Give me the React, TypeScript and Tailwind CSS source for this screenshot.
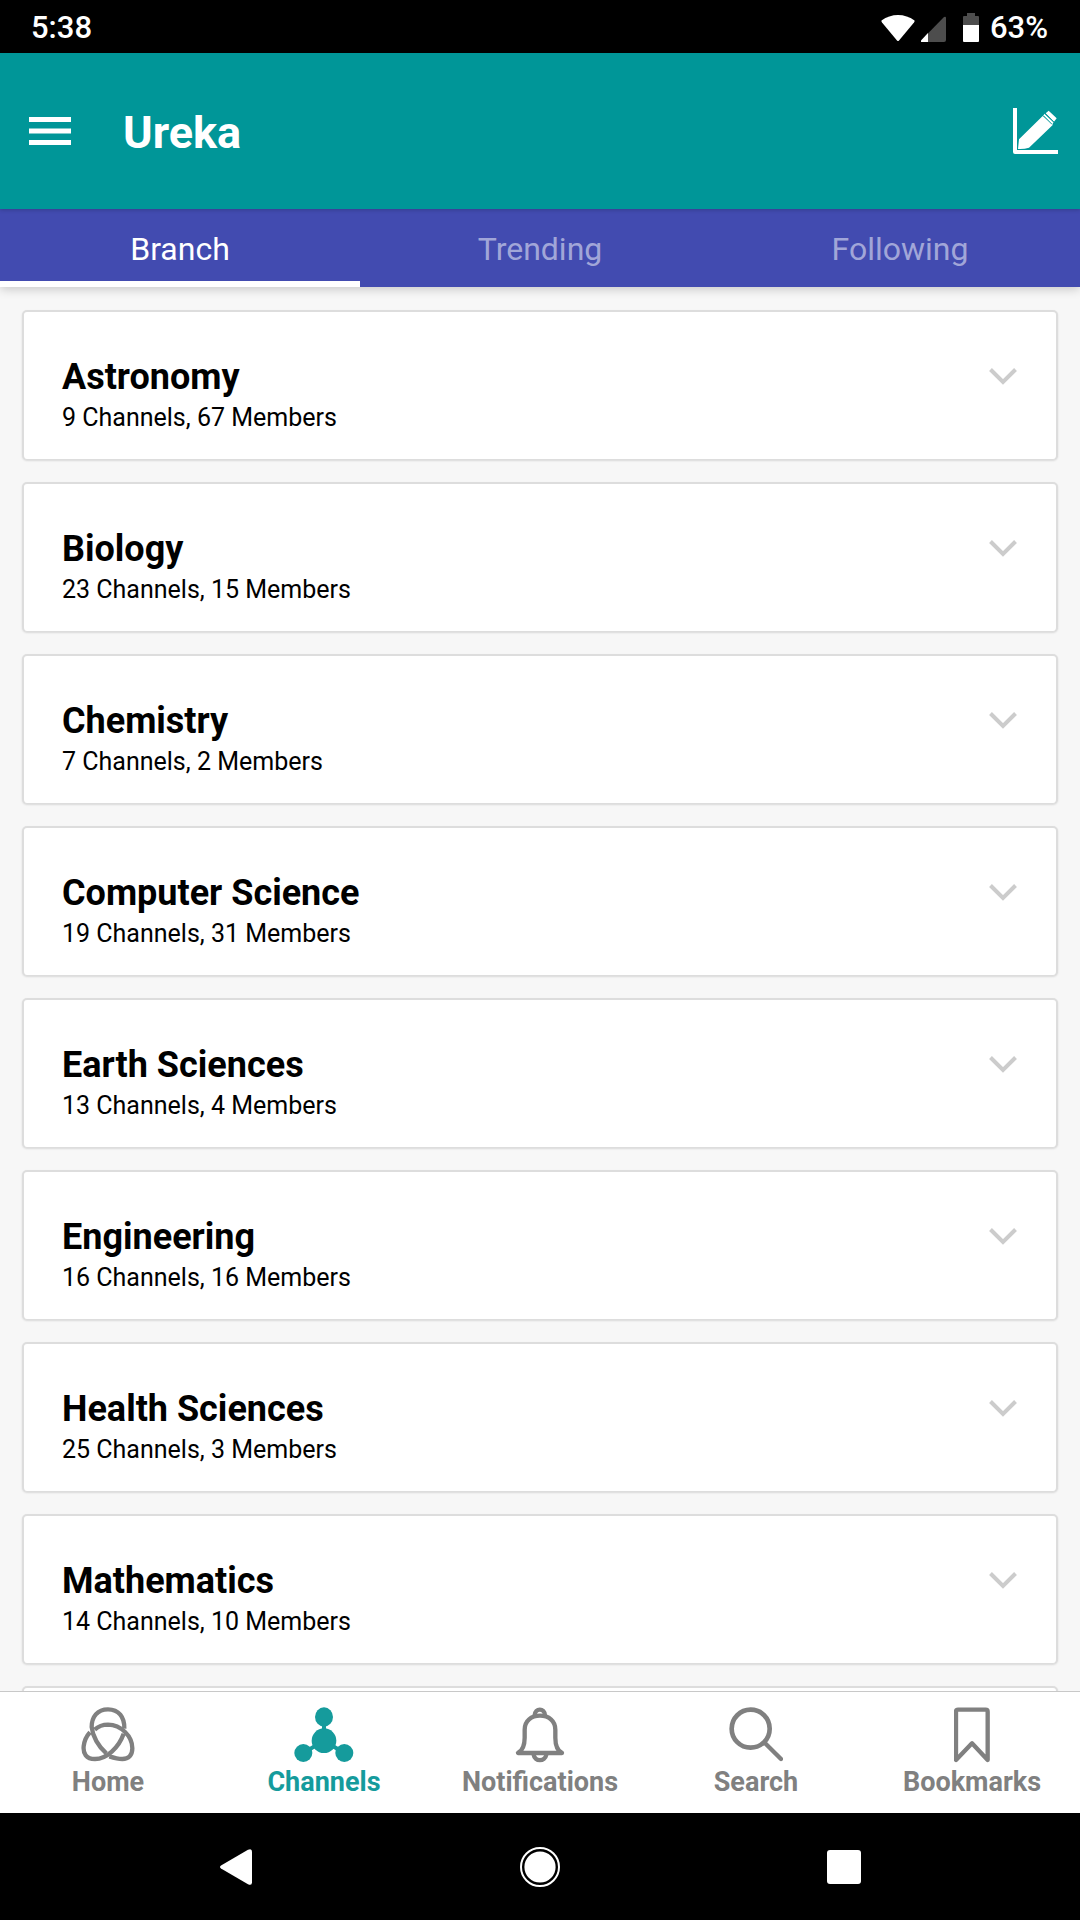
import type { ReactNode } from "react";

const branches = [
  { name: "Astronomy", channels: 9, members: 67 },
  { name: "Biology", channels: 23, members: 15 },
  { name: "Chemistry", channels: 7, members: 2 },
  { name: "Computer Science", channels: 19, members: 31 },
  { name: "Earth Sciences", channels: 13, members: 4 },
  { name: "Engineering", channels: 16, members: 16 },
  { name: "Health Sciences", channels: 25, members: 3 },
  { name: "Mathematics", channels: 14, members: 10 },
];

function StatusBar() {
  return (
    <div className="flex h-[53px] shrink-0 items-center justify-between bg-black pt-0.5 pr-8 pl-[31px] text-[31px] leading-8 font-medium">
      <span>5:38</span>
      <div className="flex items-center">
        <svg className="mr-1.5 h-7 w-[34px]" viewBox="0 0 34 28" fill="currentColor" aria-hidden="true">
          <path d="M.5 6.5Q8 1 17 1t16.500 5.500Q34 7 33 8.500L18 26.500q-1 1-2 0L1 8.500Q0 7 .5 6.500Z" />
        </svg>
        <svg className="mr-[17px] h-7 w-[25px]" viewBox="0 0 25 28" aria-hidden="true">
          <path d="M25 4v22q0 2-2 2H1q-2 0-.500-2L23 3q2-1 2 1Z" fill="#4d4d4d" />
          <path d="M7 19v9H1q-2 0-.500-2Z" fill="currentColor" />
        </svg>
        <svg className="mr-[11px] h-[29px] w-4" viewBox="0 0 16 29" aria-hidden="true">
          <path d="M0 12V4q0-1 1-1h3V0h8v3h3q1 0 1 1v8Z" fill="#4d4d4d" />
          <path d="M0 12h16v16q0 1-1 1H1q-1 0-1-1Z" fill="currentColor" />
        </svg>
        <span>63%</span>
      </div>
    </div>
  );
}

function Header() {
  return (
    <header className="relative z-20 flex h-[156px] shrink-0 items-center bg-[#009698] pr-[22px] pl-[29px] shadow-[0_1px_4px_rgba(0,0,0,0.2)]">
      <button type="button" aria-label="Menu" className="mr-[52px]">
        <svg className="h-7 w-[42px]" viewBox="0 0 42 28" fill="currentColor" aria-hidden="true">
          <path d="M0 0h42v5H0zM0 11.500h42v5H0zM0 23h42v5H0z" />
        </svg>
      </button>
      <h1 className="flex-1 pt-[3px] text-[45px] leading-[52px] font-bold">Ureka</h1>
      <button type="button" aria-label="New post">
        <svg className="h-[46px] w-[45px]" viewBox="459 321 135 138" aria-hidden="true">
          <path d="M465 321v132h129" fill="none" stroke="currentColor" strokeWidth="12" strokeLinejoin="round" />
          <path
            d="M474 444l3-29 71-70 31 26-72 69q-15 5-33 4ZM557 337l9-8 24 23-8 10Z"
            fill="currentColor"
          />
          <path d="M549 344l5-6 27 26-5 7Z" fill="currentColor" />
          <path d="M550 344l26 26M555 338l27 26" stroke="#009698" strokeWidth="3" />
        </svg>
      </button>
    </header>
  );
}

function Tabs() {
  const tabs = ["Branch", "Trending", "Following"];
  return (
    <div
      role="tablist"
      className="relative z-10 grid h-[78px] shrink-0 grid-cols-3 bg-[#424bb0] text-[32px] shadow-[0_2px_10px_rgba(0,0,0,0.2)]"
    >
      {tabs.map((tab, i) => (
        <button
          key={tab}
          type="button"
          role="tab"
          aria-selected={i === 0}
          className={
            i === 0
              ? "border-y-6 border-t-transparent border-b-white pt-0.5 text-white"
              : "border-y-6 border-transparent pt-0.5 text-[#a1a6d8]"
          }
        >
          {tab}
        </button>
      ))}
    </div>
  );
}

function Card({ children }: { children?: ReactNode }) {
  return (
    <li className="h-[150px] shrink-0 rounded-[5px] border-2 border-b border-[#dddddd] bg-white shadow-[0_1px_2px_rgba(0,0,0,0.12)]">
      {children}
    </li>
  );
}

function BranchList() {
  return (
    <ul className="flex min-h-0 flex-1 flex-col gap-[22px] overflow-hidden px-[22px] pt-[23px]">
      {branches.map((b) => (
        <Card key={b.name}>
          <button type="button" className="flex h-full w-full items-start justify-between pt-[43px] pr-[39px] pl-[38px] text-left text-black">
            <span className="flex flex-col">
              <span className="text-[36px] leading-[44px] font-bold">{b.name}</span>
              <span className="text-[25px] leading-[38px]">
                {b.channels} Channels, {b.members} Members
              </span>
            </span>
            <svg className="mt-[13px] h-[17px] w-7" viewBox="0 0 28 17" fill="none" stroke="#cccccc" strokeWidth="4" aria-hidden="true">
              <path d="M1.500 1.500 14 14 26.500 1.500" />
            </svg>
          </button>
        </Card>
      ))}
      <Card />
    </ul>
  );
}

const navItems: { label: string; icon: ReactNode }[] = [
  {
    label: "Home",
    icon: (
      <svg className="h-14 w-[54px]" viewBox="245 170 162 168" fill="none" stroke="currentColor" strokeWidth="13" aria-hidden="true">
        <path d="M375 235C376 200 358 177 326 177C294 177 277 200 277 230C280 258 297 289 321 309" />
        <path d="M373 250C358 292 322 326 287 326C260 326 251 309 253 288C255 271 261 258 272 246" />
        <path d="M286 238C298 227 311 223 326 223C365 224 399 257 399 294C399 315 388 326 369 326C355 326 342 322 330 318" />
      </svg>
    ),
  },
  {
    label: "Channels",
    icon: (
      <svg className="h-14 w-[60px]" viewBox="884 170 180 168" fill="currentColor" aria-hidden="true">
        <path d="M974 200v71l-62 37M974 271l61 37" stroke="currentColor" strokeWidth="12" fill="none" />
        <ellipse cx="974" cy="200" rx="27" ry="29" />
        <circle cx="974" cy="271" r="37" />
        <circle cx="912" cy="308" r="27" />
        <circle cx="1035" cy="308" r="27" />
      </svg>
    ),
  },
  {
    label: "Notifications",
    icon: (
      <svg className="h-14 w-[50px]" viewBox="346 170 150 168" fill="none" stroke="currentColor" strokeWidth="13" aria-hidden="true">
        <path
          d="M355 308H487C474 301 467 285 467 262V238C467 211 447 196 421 196S375 211 375 238V262C375 285 369 300 355 308Z"
          strokeLinejoin="round"
        />
        <path d="M405 195C406 172 435 172 436 195M402 313C405 335 436 335 440 313" />
      </svg>
    ),
  },
  {
    label: "Search",
    icon: (
      <svg className="h-14 w-[54px]" viewBox="86 170 162 168" fill="none" stroke="currentColor" strokeWidth="14" aria-hidden="true">
        <circle cx="151" cy="235" r="57" />
        <path d="M193 277l49 49" strokeWidth="13" strokeLinecap="round" />
      </svg>
    ),
  },
  {
    label: "Bookmarks",
    icon: (
      <svg className="h-14 w-9" viewBox="762 170 108 168" fill="none" stroke="currentColor" strokeWidth="13" aria-hidden="true">
        <path d="M768 329V184q0-6 6-6h83q6 0 6 6v145l-47-50Z" strokeLinejoin="round" />
      </svg>
    ),
  },
];

function BottomNav() {
  return (
    <nav className="grid h-[122px] shrink-0 grid-cols-5 border-t border-[#c8c8c8] bg-white">
      {navItems.map(({ label, icon }) => (
        <a
          key={label}
          href={"#" + label.toLowerCase()}
          aria-current={label === "Channels" ? "page" : undefined}
          className={
            label === "Channels"
              ? "flex flex-col items-center pt-[15px] text-[#159b9c]"
              : "flex flex-col items-center pt-[15px] text-[#808080]"
          }
        >
          {icon}
          <span className="text-[27px] leading-[38px] font-bold">{label}</span>
        </a>
      ))}
    </nav>
  );
}

function SystemNav() {
  return (
    <div className="grid h-[107px] shrink-0 grid-cols-3 place-items-center bg-black px-[84px]">
      <button type="button" aria-label="Back">
        <svg className="h-9 w-8" viewBox="0 0 32 36" fill="currentColor" aria-hidden="true">
          <path d="M1 16.500 28 .8q4-1.800 4 2v30.400q0 3.800-4 2L1 19.500q-2-1.500 0-3Z" />
        </svg>
      </button>
      <button type="button" aria-label="Home screen">
        <svg className="size-10" viewBox="0 0 40 40" aria-hidden="true">
          <circle cx="20" cy="20" r="19" fill="none" stroke="currentColor" strokeWidth="2" />
          <circle cx="20" cy="20" r="15.600" fill="currentColor" />
        </svg>
      </button>
      <button type="button" aria-label="Recent apps">
        <span className="block size-[34px] rounded-[3px] bg-white" />
      </button>
    </div>
  );
}

export default function App() {
  return (
    <div className="flex h-screen flex-col overflow-hidden bg-[#f7f7f7] font-[Roboto,sans-serif] text-white">
      <StatusBar />
      <Header />
      <Tabs />
      <BranchList />
      <BottomNav />
      <SystemNav />
    </div>
  );
}
